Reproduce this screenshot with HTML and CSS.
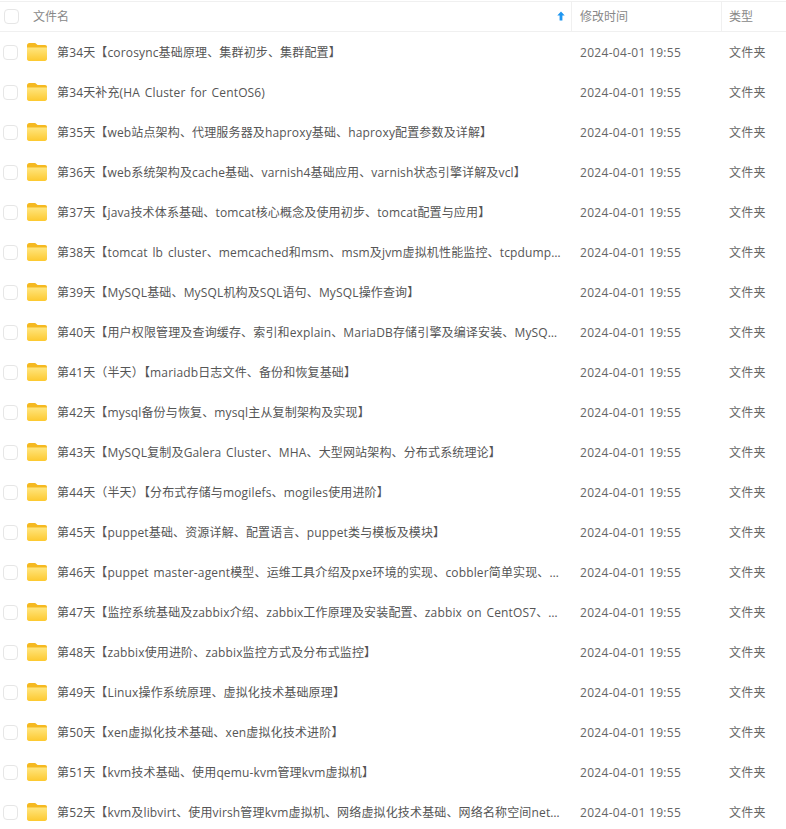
FILE: index.html
```html
<!DOCTYPE html>
<html lang="zh-CN">
<head>
  <meta charset="UTF-8" />
  <title>文件列表</title>
  <link rel="stylesheet" href="styles.css">
</head>
<body>
  <svg class="defs" width="0" height="0" aria-hidden="true">
    <defs>
      <linearGradient id="folderFront" x1="0" y1="0" x2="0" y2="1">
        <stop offset="0" stop-color="#ffe680"/>
        <stop offset="1" stop-color="#fdc92f"/>
      </linearGradient>
      <symbol id="folder" viewBox="0 0 22 20">
        <path d="M1 3.5C1 2.1 2 1 3.4 1h5.2c.8 0 1.3.3 1.8.9L11.6 3H19c1.2 0 2 .9 2 2v2H1z" fill="#f5b921"/>
        <path d="M1 5.5h20v11.6c0 1.1-.9 1.9-2 1.9H3c-1.1 0-2-.8-2-1.9z" fill="url(#folderFront)"/>
      </symbol>
    </defs>
  </svg>
  <div class="lista">
    <div class="cabecalho">
      <div class="col-check"><span class="check"></span></div>
      <div class="col-nome">
        <span>文件名</span>
        <svg class="seta" width="8" height="10" viewBox="0 0 8 10"><path d="M4 .5 7.7 4.6H5.4V9.5H2.6V4.6H.3z" fill="#1e96f0"/></svg>
      </div>
      <div class="col-data">修改时间</div>
      <div class="col-tipo">类型</div>
    </div>
    <div id="linhas"></div>
  </div>
  <script src="script.js"></script>
</body>
</html>
```

FILE: styles.css
```css
html, body {
  height: 100%;
  overflow: hidden;
}
body {
  margin: 0;
  background-color: #fff;
  font-family: "Open Sans", "Noto Sans CJK SC", sans-serif;
  font-size: 12px;
  letter-spacing: 0.3px;
  color: #666;
}
.defs {
  position: absolute;
}
.lista {
  border-top: 1px solid #f0f0f0;
  margin-top: 1px;
}
.cabecalho {
  display: flex;
  height: 29px;
  align-items: stretch;
  border-bottom: 1px solid #f0f0f0;
  color: #888;
  letter-spacing: 0;
}
.cabecalho > div {
  display: flex;
  align-items: center;
  padding-bottom: 1px;
  box-sizing: border-box;
}
.col-check {
  width: 22px;
  flex: none;
  padding-left: 3px;
  box-sizing: border-box;
}
.cabecalho .col-check {
  width: 33px;
  padding-left: 4px;
}
.col-nome {
  flex: 1;
  min-width: 0;
}
.cabecalho .col-nome {
  justify-content: space-between;
  padding-right: 6px;
  border-right: 1px solid #f0f0f0;
}
.col-data {
  width: 150px;
  flex: none;
  padding-left: 8px;
  box-sizing: border-box;
}
.col-tipo {
  width: 64px;
  flex: none;
  padding-left: 7px;
  box-sizing: border-box;
}
.cabecalho .col-data {
  border-right: 1px solid #f0f0f0;
}
.linha {
  display: flex;
  align-items: center;
  height: 40px;
}
.check {
  display: block;
  width: 13px;
  height: 13px;
  border: 1px solid #e6e6e6;
  border-radius: 4px;
}
.pasta {
  width: 22px;
  height: 20px;
  flex: none;
  margin: 0 9px 0 4px;
}
.col-nome .titulo {
  display: block;
  overflow: hidden;
  white-space: nowrap;
  text-overflow: ellipsis;
  padding-right: 9px;
  color: #555;
  letter-spacing: 0.15px;
  word-spacing: 1.5px;
}
.linha .col-nome {
  display: block;
}
```

FILE: script.js
```js
const nomes = [
  '第34天【corosync基础原理、集群初步、集群配置】',
  '第34天补充(HA Cluster for CentOS6)',
  '第35天【web站点架构、代理服务器及haproxy基础、haproxy配置参数及详解】',
  '第36天【web系统架构及cache基础、varnish4基础应用、varnish状态引擎详解及vcl】',
  '第37天【java技术体系基础、tomcat核心概念及使用初步、tomcat配置与应用】',
  '第38天【tomcat lb cluster、memcached和msm、msm及jvm虚拟机性能监控、tcpdump抓包及nc、nss工具】',
  '第39天【MySQL基础、MySQL机构及SQL语句、MySQL操作查询】',
  '第40天【用户权限管理及查询缓存、索引和explain、MariaDB存储引擎及编译安装、MySQL事务及锁】',
  '第41天（半天）【mariadb日志文件、备份和恢复基础】',
  '第42天【mysql备份与恢复、mysql主从复制架构及实现】',
  '第43天【MySQL复制及Galera Cluster、MHA、大型网站架构、分布式系统理论】',
  '第44天（半天）【分布式存储与mogilefs、mogiles使用进阶】',
  '第45天【puppet基础、资源详解、配置语言、puppet类与模板及模块】',
  '第46天【puppet master-agent模型、运维工具介绍及pxe环境的实现、cobbler简单实现、cobbler进阶】',
  '第47天【监控系统基础及zabbix介绍、zabbix工作原理及安装配置、zabbix on CentOS7、zabbix使用】',
  '第48天【zabbix使用进阶、zabbix监控方式及分布式监控】',
  '第49天【Linux操作系统原理、虚拟化技术基础原理】',
  '第50天【xen虚拟化技术基础、xen虚拟化技术进阶】',
  '第51天【kvm技术基础、使用qemu-kvm管理kvm虚拟机】',
  '第52天【kvm及libvirt、使用virsh管理kvm虚拟机、网络虚拟化技术基础、网络名称空间netns用法详解】'
];

const linhas = document.getElementById('linhas');
nomes.forEach((nome) => {
  const div = document.createElement('div');
  div.className = 'linha';
  div.innerHTML = `
    <div class="col-check"><span class="check"></span></div>
    <svg class="pasta"><use href="#folder"/></svg>
    <div class="col-nome"><span class="titulo">${nome}</span></div>
    <div class="col-data">2024-04-01 19:55</div>
    <div class="col-tipo">文件夹</div>
  `;
  linhas.appendChild(div);
});
```
